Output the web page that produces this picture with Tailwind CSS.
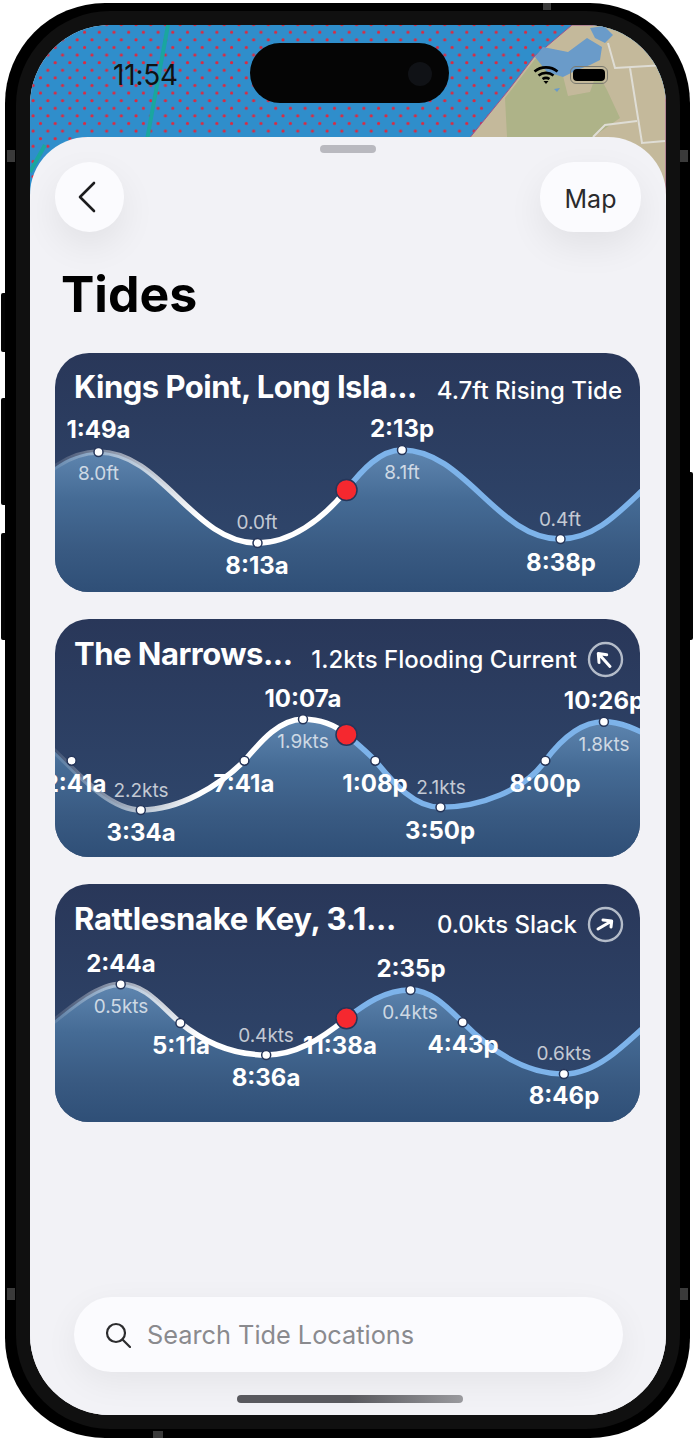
<!DOCTYPE html>
<html>
<head>
<meta charset="utf-8">
<script src="https://cdn.jsdelivr.net/npm/@tailwindcss/browser@4"></script>
</head>
<body class="bg-white font-['Inter','Liberation_Sans',sans-serif]">
<div class="relative w-[694px] h-[1440px] overflow-hidden">
  <!-- side buttons -->
  <div class="absolute left-[1px] top-[293px] w-[6px] h-[59px] rounded-l-[2px] bg-[#050505]"></div>
  <div class="absolute left-[1px] top-[398px] w-[6px] h-[107px] rounded-l-[2px] bg-[#050505]"></div>
  <div class="absolute left-[1px] top-[533px] w-[6px] h-[107px] rounded-l-[2px] bg-[#050505]"></div>
  <div class="absolute right-[1px] top-[472px] w-[6px] h-[168px] rounded-r-[2px] bg-[#050505]"></div>

  <!-- phone -->
  <div class="relative ml-[5px] mt-[3px] w-[685px] h-[1435px] rounded-[100px] bg-black pl-[25px] pr-[24px] pt-[22px] pb-[23px]">
    <div class="absolute left-[2px] top-[147px] w-[8px] h-[12px] bg-[#3a3a3a]"></div>
    <div class="absolute right-[2px] top-[147px] w-[8px] h-[12px] bg-[#3a3a3a]"></div>
    <div class="absolute left-[2px] top-[1285px] w-[8px] h-[12px] bg-[#3a3a3a]"></div>
    <div class="absolute right-[2px] top-[1285px] w-[8px] h-[12px] bg-[#3a3a3a]"></div>
    <div class="absolute left-[538px] top-[0px] w-[8px] h-[7px] bg-[#3a3a3a]"></div>
    <div class="absolute left-[148px] bottom-[0px] w-[10px] h-[7px] bg-[#3a3a3a]"></div>

    <div class="relative w-[636px] h-[1390px] rounded-[80px] overflow-hidden flex flex-col bg-[#f2f2f6] shadow-[0_0_0_14px_#101010]">
      <!-- map backdrop -->
      <svg class="absolute left-0 top-0" width="636" height="180" viewBox="30 25 636 180">
        <defs>
          <pattern id="dots" x="95.8" y="28.8" width="14.7" height="15.2" patternUnits="userSpaceOnUse">
            <circle cx="3.5" cy="3.5" r="1.6" fill="#dc2a40"/>
            <circle cx="10.85" cy="11.1" r="1.6" fill="#dc2a40"/>
          </pattern>
        </defs>
        <rect x="30" y="25" width="636" height="180" fill="#2f8ecb"/>
        <rect x="30" y="25" width="636" height="180" fill="url(#dots)"/>
        <path d="M168 25 L147 140" stroke="#1aa69f" stroke-width="4" fill="none"/>
        <path d="M30 172 L45 145" stroke="#1aa69f" stroke-width="4" fill="none"/>
        <path d="M572 25 L534 57 L507 92 L468 140 L468 205 L666 205 L666 25 Z" fill="#c4b99b" stroke="#a0518c" stroke-width="1"/>
        <path d="M536 58 L505 98 L507 137 L593 137 L620 118 L607 90 L597 72 L590 92 L568 96 L563 76 Z" fill="#aeb388"/>
        <path d="M535 57 L543 47 L568 52 L587 38 L602 47 L600 60 L590 65 L577 70 L563 77 L547 72 Z" fill="#6a9bc9"/>
        <path d="M590 28 L604 26 L613 35 L605 43 L595 38 Z" fill="#6a9bc9"/>
        <path d="M554 89 L560 88 L557 92 Z" fill="#6a9bc9"/>
        <path d="M608 43 L615 68 L665 65 M630 68 L642 143 L665 141 M593 137 L605 125 L637 121" stroke="#dfddd5" stroke-width="2" fill="none"/>
      </svg>

      <!-- status bar -->
      <div class="relative h-[112px] flex items-start pt-[18px]">
        <div class="w-[220px] pl-[83px] pt-[15px] text-[28px] leading-[34px] text-[#111] tracking-[-0.2px]">11:54</div>
        <div class="relative w-[199px] h-[60px] rounded-full bg-[#050505]">
          <div class="absolute left-[158px] top-[19px] w-[24px] h-[24px] rounded-full bg-[#101216]"></div>
        </div>
        <svg class="ml-[84px] mt-[22px]" width="26" height="20" viewBox="0 0 26 20" fill="none" stroke="#000" stroke-width="2.6">
          <path d="M1.5 6.5 C8 1 18 1 24.5 6.5"/>
          <path d="M5.5 10.5 C10 7 16 7 20.5 10.5"/>
          <path d="M9.5 14 C11.5 12.7 14.5 12.7 16.5 14"/>
          <path d="M10.5 16 L13 19 L15.5 16 Z" fill="#000" stroke="none"/>
        </svg>
        <div class="ml-[11px] mt-[23px] w-[38px] h-[18px] rounded-[6px] border border-[#7b7a70] p-[2px]">
          <div class="w-full h-full rounded-[4px] bg-black"></div>
        </div>
      </div>

      <!-- sheet -->
      <div class="relative flex-1 flex flex-col rounded-t-[58px] bg-[#f2f2f6] pl-[25px] pr-[26px]">
        <div class="mt-[8px] mx-auto w-[56px] h-[8px] rounded-full bg-[#b9b9bf]"></div>
        <div class="mt-[9px] flex justify-between items-start">
          <div class="w-[69px] h-[70px] rounded-full bg-[#fbfbfe] shadow-[0_14px_36px_rgba(0,0,0,0.07)] flex items-center justify-center">
            <svg class="mr-[5px]" width="20" height="32" viewBox="0 0 20 32" fill="none" stroke="#1c1c1e" stroke-width="2.6" stroke-linecap="round" stroke-linejoin="round"><path d="M17 2 L3 16 L17 30"/></svg>
          </div>
          <div class="w-[101px] h-[70px] -mr-[1px] pt-[5px] rounded-[34px] bg-[#fbfbfe] shadow-[0_14px_36px_rgba(0,0,0,0.07)] flex items-center justify-center text-[25px] text-[#2a2a2c]">Map</div>
        </div>
        <h1 class="mt-[29px] pl-[6px] h-[92px] text-[50px] leading-[66px] font-bold text-black">Tides</h1>

        <div class="flex flex-col gap-[27px]">
          <!-- card 1 -->
          <div class="relative h-[239px] rounded-[34px] overflow-hidden bg-gradient-to-b from-[#293759] to-[#30496f]">
            <svg class="absolute left-0 top-0" width="585" height="239" viewBox="55 353 585 239">
              <defs>
                <linearGradient id="f1" gradientUnits="userSpaceOnUse" x1="0" y1="450" x2="0" y2="592">
                  <stop offset="0" stop-color="#5f86b0"/><stop offset="0.35" stop-color="#456b95"/><stop offset="0.7" stop-color="#395a82"/><stop offset="1" stop-color="#2f4f77"/>
                </linearGradient>
                <linearGradient id="s1" gradientUnits="userSpaceOnUse" x1="55" y1="0" x2="200" y2="0">
                  <stop offset="0" stop-color="#ffffff" stop-opacity="0.1"/><stop offset="1" stop-color="#ffffff"/>
                </linearGradient>
              </defs>
              <path d="M-57 541 C5 541 36 452 98.5 452 C162 452 193 543 257.5 543 C290 543 322 520 346.5 490 C362 470 380 450 402 450 C465 450 497 539 560 539 C623 539 652 451 715 451 L715 600 L-57 600 Z" fill="url(#f1)"/>
              <path d="M-57 541 C5 541 36 452 98.5 452 C162 452 193 543 257.5 543 C290 543 322 520 346.5 490" fill="none" stroke="url(#s1)" stroke-width="5.5"/>
              <path d="M346.5 490 C362 470 380 450 402 450 C465 450 497 539 560 539 C623 539 652 451 715 451" fill="none" stroke="#7db3ea" stroke-width="5.5"/>
              <g fill="#fff" stroke="#26365a" stroke-width="1.5">
                <circle cx="98.5" cy="452" r="4.5"/><circle cx="257.5" cy="543" r="4.5"/><circle cx="402" cy="450" r="4.5"/><circle cx="560.5" cy="539" r="4.5"/>
              </g>
              <circle cx="346.5" cy="490" r="10.5" fill="#f5282f" stroke="#26365a" stroke-width="1.5"/>
              <g fill="#fff" font-size="24" font-weight="700" text-anchor="middle">
                <text x="98.5" y="438">1:49a</text><text x="257" y="574">8:13a</text><text x="402" y="437">2:13p</text><text x="561" y="571">8:38p</text>
              </g>
              <g fill="#fff" fill-opacity="0.72" font-size="19" text-anchor="middle">
                <text x="98.5" y="480">8.0ft</text><text x="257" y="529">0.0ft</text><text x="402" y="479">8.1ft</text><text x="560" y="526">0.4ft</text>
              </g>
            </svg>
            <div class="relative flex justify-between items-start pl-[19px] pr-[18px] pt-[14px]">
              <div class="text-[31px] leading-[40px] font-bold text-white tracking-[-0.5px]">Kings Point, Long Isla...</div>
              <div class="pt-[4px] text-[24px] leading-[40px] font-medium text-white">4.7ft Rising Tide</div>
            </div>
          </div>

          <!-- card 2 -->
          <div class="relative h-[238px] rounded-[34px] overflow-hidden bg-gradient-to-b from-[#293759] to-[#30496f]">
            <svg class="absolute left-0 top-0" width="585" height="238" viewBox="55 619 585 238">
              <defs>
                <linearGradient id="f2" gradientUnits="userSpaceOnUse" x1="0" y1="719" x2="0" y2="857">
                  <stop offset="0" stop-color="#5f86b0"/><stop offset="0.35" stop-color="#456b95"/><stop offset="0.7" stop-color="#395a82"/><stop offset="1" stop-color="#2f4f77"/>
                </linearGradient>
                <linearGradient id="s2" gradientUnits="userSpaceOnUse" x1="55" y1="0" x2="200" y2="0">
                  <stop offset="0" stop-color="#ffffff" stop-opacity="0.1"/><stop offset="1" stop-color="#ffffff"/>
                </linearGradient>
              </defs>
              <path d="M0 716 C40 716 90 810 140.8 810 C180 810 220 785 244.4 760.7 C262 740 280 719.3 303 719.3 C320 719.3 335 725 346.5 734.7 C355 742 365 750 375.3 760.7 C395 785 415 807.3 440.5 807.3 C480 807.3 525 790 545.3 760.7 C562 738 582 721.7 603.9 721.7 C620 721.7 635 728 660 742 L660 870 L0 870 Z" fill="url(#f2)"/>
              <path d="M0 716 C40 716 90 810 140.8 810 C180 810 220 785 244.4 760.7 C262 740 280 719.3 303 719.3 C320 719.3 335 725 346.5 734.7" fill="none" stroke="url(#s2)" stroke-width="5.5"/>
              <path d="M346.5 734.7 C355 742 365 750 375.3 760.7 C395 785 415 807.3 440.5 807.3 C480 807.3 525 790 545.3 760.7 C562 738 582 721.7 603.9 721.7 C620 721.7 635 728 660 742" fill="none" stroke="#7db3ea" stroke-width="5.5"/>
              <g fill="#fff" stroke="#26365a" stroke-width="1.5">
                <circle cx="71.6" cy="760.7" r="4.5"/><circle cx="140.8" cy="810" r="4.5"/><circle cx="244.4" cy="760.7" r="4.5"/><circle cx="303" cy="719.3" r="4.5"/><circle cx="375.3" cy="760.7" r="4.5"/><circle cx="440.5" cy="807.3" r="4.5"/><circle cx="545.3" cy="760.7" r="4.5"/><circle cx="603.9" cy="721.7" r="4.5"/>
              </g>
              <circle cx="346.5" cy="734.7" r="10.5" fill="#f5282f" stroke="#26365a" stroke-width="1.5"/>
              <g fill="#fff" font-size="24" font-weight="700" text-anchor="middle">
                <text x="75" y="792">2:41a</text><text x="141" y="841">3:34a</text><text x="244" y="792">7:41a</text><text x="303" y="707">10:07a</text><text x="375" y="792">1:08p</text><text x="440" y="839">3:50p</text><text x="545" y="792">8:00p</text><text x="604" y="709">10:26p</text>
              </g>
              <g fill="#fff" fill-opacity="0.72" font-size="19" text-anchor="middle">
                <text x="141" y="797">2.2kts</text><text x="303" y="748">1.9kts</text><text x="441" y="794">2.1kts</text><text x="604" y="751">1.8kts</text>
              </g>
            </svg>
            <div class="relative flex justify-between items-start pl-[19px] pr-[16px] pt-[15px]">
              <div class="text-[31px] leading-[40px] font-bold text-white tracking-[-0.5px]">The Narrows...</div>
              <div class="flex items-center gap-[10px] pt-[4px]">
                <div class="text-[24px] leading-[40px] font-medium text-white pt-[2px]">1.2kts Flooding Current</div>
                <svg width="37" height="37" viewBox="0 0 37 37" fill="none"><circle cx="18.5" cy="18.5" r="16.5" stroke="#b4bcc9" stroke-width="2.4"/><path d="M23 25.5 L11.3 12.5 M19.7 13.8 L11.3 12.5 L12 21.5" stroke="#fff" stroke-width="3" stroke-linecap="round" stroke-linejoin="round"/></svg>
              </div>
            </div>
          </div>

          <!-- card 3 -->
          <div class="relative h-[238px] rounded-[34px] overflow-hidden bg-gradient-to-b from-[#293759] to-[#30496f]">
            <svg class="absolute left-0 top-0" width="585" height="238" viewBox="55 884 585 238">
              <defs>
                <linearGradient id="f3" gradientUnits="userSpaceOnUse" x1="0" y1="984" x2="0" y2="1122">
                  <stop offset="0" stop-color="#5f86b0"/><stop offset="0.35" stop-color="#456b95"/><stop offset="0.7" stop-color="#395a82"/><stop offset="1" stop-color="#2f4f77"/>
                </linearGradient>
                <linearGradient id="s3" gradientUnits="userSpaceOnUse" x1="55" y1="0" x2="200" y2="0">
                  <stop offset="0" stop-color="#ffffff" stop-opacity="0.1"/><stop offset="1" stop-color="#ffffff"/>
                </linearGradient>
              </defs>
              <path d="M0 1060 C40 1040 85 984.3 120.7 984.3 C145 984.3 160 1005 180.4 1023 C205 1043 235 1055 266.2 1055 C295 1055 320 1040 346.5 1018.3 C365 1004 385 990 410.5 990 C430 990 445 1005 462.7 1022.3 C490 1050 525 1074 563.9 1074 C595 1074 620 1050 660 1012 L660 1135 L0 1135 Z" fill="url(#f3)"/>
              <path d="M0 1060 C40 1040 85 984.3 120.7 984.3 C145 984.3 160 1005 180.4 1023 C205 1043 235 1055 266.2 1055 C295 1055 320 1040 346.5 1018.3" fill="none" stroke="url(#s3)" stroke-width="5.5"/>
              <path d="M346.5 1018.3 C365 1004 385 990 410.5 990 C430 990 445 1005 462.7 1022.3 C490 1050 525 1074 563.9 1074 C595 1074 620 1050 660 1012" fill="none" stroke="#7db3ea" stroke-width="5.5"/>
              <g fill="#fff" stroke="#26365a" stroke-width="1.5">
                <circle cx="120.7" cy="984.3" r="4.5"/><circle cx="180.4" cy="1023" r="4.5"/><circle cx="266.2" cy="1055" r="4.5"/><circle cx="410.5" cy="990" r="4.5"/><circle cx="462.7" cy="1022.3" r="4.5"/><circle cx="563.9" cy="1074" r="4.5"/>
              </g>
              <circle cx="346.5" cy="1018.3" r="10.5" fill="#f5282f" stroke="#26365a" stroke-width="1.5"/>
              <g fill="#fff" font-size="24" font-weight="700" text-anchor="middle">
                <text x="121" y="972">2:44a</text><text x="181" y="1054">5:11a</text><text x="266" y="1086">8:36a</text><text x="340" y="1054">11:38a</text><text x="411" y="977">2:35p</text><text x="463" y="1053">4:43p</text><text x="564" y="1104">8:46p</text>
              </g>
              <g fill="#fff" fill-opacity="0.72" font-size="19" text-anchor="middle">
                <text x="121" y="1013">0.5kts</text><text x="266" y="1042">0.4kts</text><text x="410" y="1019">0.4kts</text><text x="564" y="1060">0.6kts</text>
              </g>
            </svg>
            <div class="relative flex justify-between items-start pl-[19px] pr-[16px] pt-[15px]">
              <div class="text-[31px] leading-[40px] font-bold text-white tracking-[-0.3px]">Rattlesnake Key, 3.1...</div>
              <div class="flex items-center gap-[10px] pt-[4px]">
                <div class="text-[24px] leading-[40px] font-medium text-white pt-[2px]">0.0kts Slack</div>
                <svg width="37" height="37" viewBox="0 0 37 37" fill="none"><circle cx="18.5" cy="18.5" r="16.5" stroke="#b4bcc9" stroke-width="2.4"/><path d="M11 23 L24.7 15 M16 14 L24.7 15 L24 21" stroke="#fff" stroke-width="3" stroke-linecap="round" stroke-linejoin="round"/></svg>
              </div>
            </div>
          </div>
        </div>

        <!-- search -->
        <div class="mt-auto ml-[19px] mr-[17px] h-[75px] rounded-[38px] bg-[#fbfbfe] shadow-[0_10px_34px_rgba(0,0,0,0.06)] flex items-center pl-[31px] gap-[16px]">
          <svg width="26" height="26" viewBox="0 0 26 26" fill="none" stroke="#2c2c2e" stroke-width="2.2" stroke-linecap="round"><circle cx="11" cy="11" r="9"/><path d="M17.5 17.5 L25 25"/></svg>
          <div class="text-[25.3px] pt-[1px] text-[#8a8a8e]">Search Tide Locations</div>
        </div>
        <div class="mt-[23px] mb-[12px] ml-[182px] w-[226px] h-[8px] rounded-full bg-gradient-to-r from-[#59595e] via-[#59595e] to-[#9a9a9e]"></div>
      </div>
    </div>
  </div>
</div>
</body>
</html>
